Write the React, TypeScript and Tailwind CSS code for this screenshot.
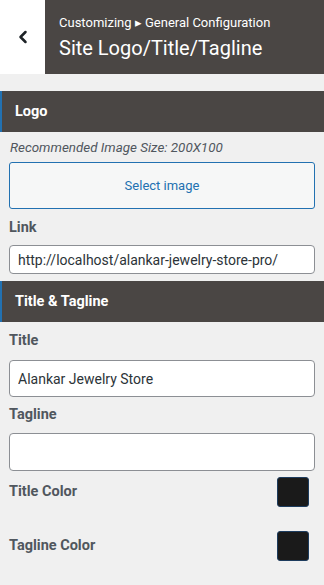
import { ChevronLeft } from 'lucide-react';

function SectionHeader({ title }: { title: string }) {
  return (
    <div className="flex h-[41px] items-center border-l-2 border-[#2271b1] bg-[#4a4644] pl-[13px]">
      <h3 className="text-[14.5px] font-bold text-white">{title}</h3>
    </div>
  );
}

function Label({ children }: { children: string }) {
  return <span className="block text-[14.5px] leading-[20px] font-bold text-[#50575e]">{children}</span>;
}

function ColorRow({ label }: { label: string }) {
  return (
    <div className="flex items-center justify-between pl-[9px] pr-[15px]">
      <Label>{label}</Label>
      <button className="h-[30px] w-[32px] rounded-[3px] border border-[#1d3c5e] bg-[#1a1a1a]" />
    </div>
  );
}

export default function App() {
  return (
    <div className="h-[585px] w-[324px] bg-[#f0f0f0] font-['Roboto',sans-serif]">
      <div className="flex h-[74px]">
        <button className="flex w-[45px] items-center justify-center bg-white text-[#1d2327]">
          <ChevronLeft size={20} strokeWidth={3} />
        </button>
        <div className="flex flex-1 flex-col justify-center bg-[#4a4644] pl-[14px] text-white">
          <span className="text-[13px] leading-[16px]">Customizing ▸ General Configuration</span>
          <span className="mt-[5px] text-[20px] leading-[24px]">Site Logo/Title/Tagline</span>
        </div>
      </div>

      <div className="mt-[17px]">
        <SectionHeader title="Logo" />
        <p className="mt-[6px] pl-[10px] text-[13.4px] leading-[20px] italic text-[#50575e]">Recommended Image Size: 200X100</p>
        <div className="mt-[4px] px-[9px]">
          <button className="flex h-[47px] w-full items-center justify-center rounded-[3px] border border-[#2271b1] bg-[#f6f7f7] text-[13px] text-[#2271b1]">
            Select image
          </button>
        </div>
        <div className="mt-[9px] px-[9px]">
          <Label>Link</Label>
          <input
            className="mt-[7px] h-[29px] w-full rounded-[4px] border border-[#8c8f94] bg-white px-[8px] text-[14px] text-[#2c3338] outline-none"
            defaultValue="http://localhost/alankar-jewelry-store-pro/"
          />
        </div>
      </div>

      <div className="mt-[7px]">
        <SectionHeader title="Title & Tagline" />
        <div className="mt-[9px] px-[9px]">
          <Label>Title</Label>
          <input
            className="mt-[9px] h-[37px] w-full rounded-[4px] border border-[#8c8f94] bg-white px-[8px] text-[14px] text-[#2c3338] outline-none"
            defaultValue="Alankar Jewelry Store"
          />
        </div>
        <div className="mt-[8px] px-[9px]">
          <Label>Tagline</Label>
          <input className="mt-[8px] h-[38px] w-full rounded-[4px] border border-[#8c8f94] bg-white px-[8px] text-[14px] outline-none" />
        </div>
        <div className="mt-[6px]">
          <ColorRow label="Title Color" />
        </div>
        <div className="mt-[24px]">
          <ColorRow label="Tagline Color" />
        </div>
      </div>
    </div>
  );
}
